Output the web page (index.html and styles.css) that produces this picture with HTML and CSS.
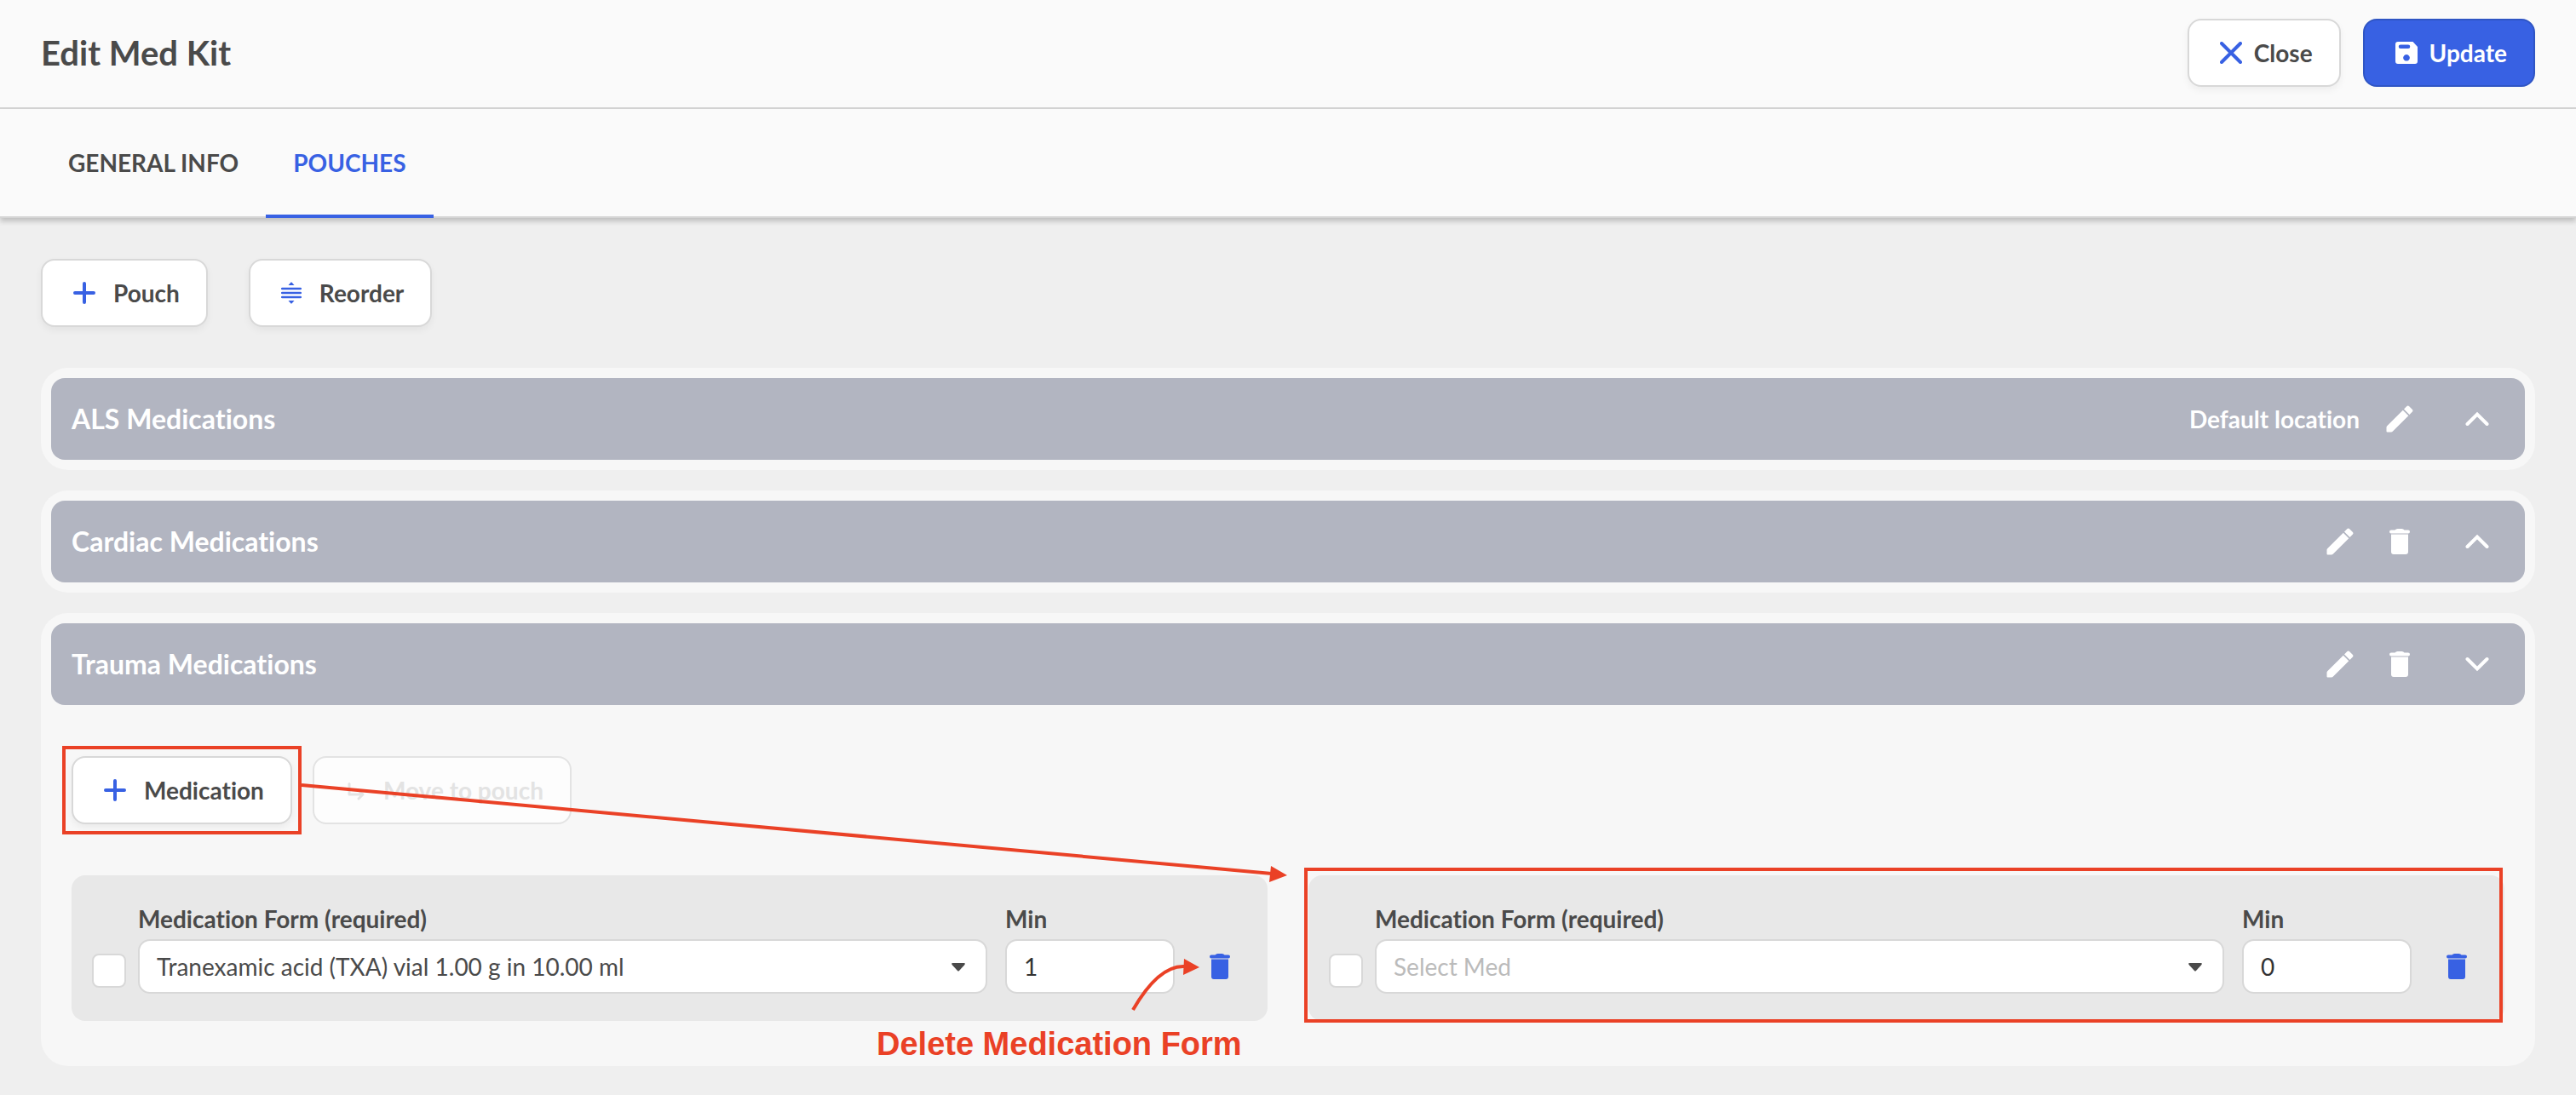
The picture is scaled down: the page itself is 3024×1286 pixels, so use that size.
FILE: index.html
```html
<!DOCTYPE html>
<html lang="en">
<head>
<meta charset="utf-8">
<title>Edit Med Kit</title>
<link rel="stylesheet" href="styles.css">
</head>
<body>
<svg class="defs" aria-hidden="true">
  <symbol id="plus" viewBox="0 0 26 26"><path d="M13 2v22M2 13h22" fill="none" stroke="currentColor" stroke-width="4" stroke-linecap="round"/></symbol>
  <symbol id="pencil" viewBox="0 0 32 32"><path d="M.5 30.500V26Q.5 25 1.200 24.300L19.800 5.700L26.300 12.200L8.200 30.300Q7.200 31.500 5.500 31.500H1.500Q.5 31.500.5 30.500ZM21 4.500L24.200 1.300Q25.700-.2 27.200 1.300L30.700 4.800Q32.200 6.300 30.700 7.800L27.500 11Z" fill="currentColor"/></symbol>
  <symbol id="trash" viewBox="0 0 24 30"><path d="M2 1.500H6.500Q7.500 0 9.500 0H14.500Q16.500 0 17.500 1.500H22Q24 1.500 24 3.500T22 5.500H2Q0 5.500 0 3.500T2 1.500ZM2 6.500H22V27Q22 30 19 30H5Q2 30 2 27Z" fill="currentColor"/></symbol>
  <symbol id="up" viewBox="0 0 28 18"><path d="M2.500 15L14 3.500L25.500 15" fill="none" stroke="currentColor" stroke-width="4" stroke-linecap="round"/></symbol>
  <symbol id="down" viewBox="0 0 28 18"><path d="M2.500 3L14 14.500L25.500 3" fill="none" stroke="currentColor" stroke-width="4" stroke-linecap="round"/></symbol>
</svg>

<header class="topbar">
  <h1 class="title">Edit Med Kit</h1>
  <div class="topbar-actions">
    <button class="btn btn-tight" type="button"><svg class="icon-26" viewBox="0 0 26 26"><path d="M2 2L24 24M24 2L2 24" fill="none" stroke="currentColor" stroke-width="4" stroke-linecap="round"/></svg>Close</button>
    <button class="btn btn-tight btn-primary" type="button"><svg class="icon-26" viewBox="0 0 26 26"><path fill-rule="evenodd" d="M3 0H20.500L26 6V23Q26 26 23 26H3Q0 26 0 23V3Q0 0 3 0ZM6 3.500a2 2 0 0 0 0 4.500H15a2 2 0 0 0 0-4.500ZM13 15a3.800 3.800 0 1 0 .01 0Z" fill="currentColor"/></svg>Update</button>
  </div>
</header>

<nav class="tabs">
  <a class="tab" href="#general">GENERAL INFO</a>
  <a class="tab tab-active" href="#pouches">POUCHES</a>
</nav>

<main class="content">
  <div class="toolbar">
    <button class="btn" type="button"><svg class="icon-26"><use href="#plus"/></svg>Pouch</button>
    <button class="btn" type="button"><svg class="icon-24" viewBox="0 0 24 26"><path d="M8.500 4L11.500.5H12.500L15.500 4ZM8.500 22L11.500 25.500H12.500L15.500 22Z" fill="currentColor"/><path d="M1.200 8H22.800M1.200 13H22.800M1.200 18H22.800" fill="none" stroke="currentColor" stroke-width="2.600" stroke-linecap="round"/></svg>Reorder</button>
  </div>

  <section class="pouch">
    <div class="pouch-head">
      <h2 class="pouch-name">ALS Medications</h2>
      <span class="default-location">Default location</span>
      <button class="icon-btn" type="button" aria-label="Edit"><svg class="icon-32"><use href="#pencil"/></svg></button>
      <button class="icon-btn toggle" type="button" aria-label="Expand"><svg class="chevron"><use href="#up"/></svg></button>
    </div>
  </section>

  <section class="pouch">
    <div class="pouch-head">
      <h2 class="pouch-name">Cardiac Medications</h2>
      <button class="icon-btn" type="button" aria-label="Edit"><svg class="icon-32"><use href="#pencil"/></svg></button>
      <button class="icon-btn" type="button" aria-label="Delete"><svg class="trash"><use href="#trash"/></svg></button>
      <button class="icon-btn toggle" type="button" aria-label="Expand"><svg class="chevron"><use href="#up"/></svg></button>
    </div>
  </section>

  <section class="pouch pouch-open">
    <div class="pouch-head">
      <h2 class="pouch-name">Trauma Medications</h2>
      <button class="icon-btn" type="button" aria-label="Edit"><svg class="icon-32"><use href="#pencil"/></svg></button>
      <button class="icon-btn" type="button" aria-label="Delete"><svg class="trash"><use href="#trash"/></svg></button>
      <button class="icon-btn toggle" type="button" aria-label="Collapse"><svg class="chevron"><use href="#down"/></svg></button>
    </div>
    <div class="pouch-body">
      <div class="med-actions">
        <div class="marked marked-button">
          <button class="btn" type="button"><svg class="icon-26"><use href="#plus"/></svg>Medication</button>
        </div>
        <button class="btn" type="button" disabled><svg class="icon-24" viewBox="0 0 24 26"><path d="M5 5.500V18H21M15 12.500L21 18L16 23" fill="none" stroke="currentColor" stroke-width="3" stroke-linecap="round" stroke-linejoin="round"/></svg>Move to pouch</button>
      </div>
      <div class="med-grid">
        <div class="med-card">
          <input class="check" type="checkbox" aria-label="Select medication 1">
          <div class="field field-form">
            <label for="form1">Medication Form (required)</label>
            <div class="select-wrap">
              <select class="control" id="form1"><option>Tranexamic acid (TXA) vial 1.00 g in 10.00 ml</option></select>
              <svg class="caret" viewBox="0 0 16 10"><path d="M1.500 0H14.500Q17 0 15 2.500L9 9Q8 10 7 9L1 2.500Q-1 0 1.500 0Z" fill="currentColor"/></svg>
            </div>
          </div>
          <div class="field field-min">
            <label for="min1">Min</label>
            <input class="control" id="min1" type="text" value="1">
          </div>
          <button class="icon-btn card-delete" type="button" aria-label="Delete medication form"><svg class="trash"><use href="#trash"/></svg></button>
        </div>
        <div class="med-card marked marked-card">
          <input class="check" type="checkbox" aria-label="Select medication 2">
          <div class="field field-form">
            <label for="form2">Medication Form (required)</label>
            <div class="select-wrap">
              <select class="control control-empty" id="form2"><option>Select Med</option></select>
              <svg class="caret" viewBox="0 0 16 10"><path d="M1.500 0H14.500Q17 0 15 2.500L9 9Q8 10 7 9L1 2.500Q-1 0 1.500 0Z" fill="currentColor"/></svg>
            </div>
          </div>
          <div class="field field-min">
            <label for="min2">Min</label>
            <input class="control" id="min2" type="text" value="0">
          </div>
          <button class="icon-btn card-delete" type="button" aria-label="Delete medication form"><svg class="trash"><use href="#trash"/></svg></button>
        </div>
      </div>
    </div>
    <svg class="arrows" viewBox="0 0 1480 532" aria-hidden="true">
      <path d="M306 202L1445 306M1282 466Q1312 414 1342 415" fill="none" stroke="currentColor" stroke-width="4"/>
      <path d="M1444 297L1463 308L1442 316ZM1342 406L1360 416L1341 425Z" fill="currentColor"/>
    </svg>
    <p class="note">Delete Medication Form</p>
  </section>
</main>
</body>
</html>
```
FILE: styles.css
```css
* { box-sizing: border-box; }

body {
  margin: 0;
  min-height: 100vh;
  background: #efefef;
  color: #4a4a4a;
  font-family: Lato, sans-serif;
  font-size: 28px;
  line-height: 36px;
  font-variant-ligatures: none;
}

h1, h2, p { margin: 0; }
svg { display: block; flex: none; }
.defs { position: absolute; width: 0; height: 0; }

.topbar {
  display: flex;
  align-items: center;
  justify-content: space-between;
  height: 128px;
  padding: 0 48px 2px;
  background: #fafafa;
  border-bottom: 2px solid #d5d5d5;
}
.title { font-size: 40px; line-height: 48px; font-weight: 700; }
.topbar-actions { display: flex; gap: 26px; }

.btn {
  display: flex;
  align-items: center;
  gap: 21px;
  height: 80px;
  padding: 0 31px 0 36px;
  background: #fff;
  border: 2px solid #d8d8d8;
  border-radius: 16px;
  box-shadow: 0 4px 8px rgba(0, 0, 0, .05);
  color: #4a4a4a;
  font: 700 28px/36px Lato, sans-serif;
  font-variant-ligatures: none;
}
.btn svg { color: #3861e3; }
.btn-tight { gap: 14px; }
.btn-primary { background: #3861e3; border-color: #2f55c4; color: #fff; box-shadow: none; }
.btn-primary svg { color: #fff; }
.btn:disabled { background: #fdfdfd; border-color: #e3e3e3; color: #e3e3e3; box-shadow: none; }
.btn:disabled svg { color: #e3e3e3; }

.icon-24 { width: 24px; height: 26px; }
.icon-26 { width: 26px; height: 26px; }
.icon-32 { width: 32px; height: 32px; }
.trash { width: 24px; height: 30px; }
.chevron { width: 28px; height: 18px; }

.tabs {
  display: flex;
  height: 128px;
  padding: 0 48px;
  background: #fafafa;
  border-bottom: 2px solid #d5d5d5;
  box-shadow: 0 4px 6px rgba(0, 0, 0, .2);
}
.tab {
  display: flex;
  align-items: center;
  height: 128px;
  padding: 2px 32px 0;
  border-bottom: 4px solid transparent;
  color: #4a4a4a;
  font-weight: 700;
  text-decoration: none;
}
.tab-active { color: #3861e3; border-color: #3861e3; }

.content {
  display: flex;
  flex-direction: column;
  gap: 24px;
  padding: 48px 48px 34px;
}
.toolbar { display: flex; gap: 48px; margin-bottom: 24px; }

.pouch { padding: 12px; background: #f7f7f7; border-radius: 32px; }
.pouch-open { position: relative; }
.pouch-head {
  display: flex;
  align-items: center;
  height: 96px;
  padding: 0 24px;
  background: #b2b5c1;
  border-radius: 16px;
  color: #fff;
}
.pouch-name { flex: 1; font-size: 32px; line-height: 40px; font-weight: 700; }
.default-location { margin-right: 12px; font-weight: 700; }

.icon-btn {
  display: flex;
  align-items: center;
  justify-content: center;
  width: 70px;
  height: 64px;
  padding: 0;
  background: none;
  border: 0;
  color: inherit;
}
.toggle { width: 64px; margin-left: 24px; }

.pouch-body { padding: 60px 24px 41px; }
.med-actions { display: flex; gap: 24px; margin-bottom: 60px; }
.med-grid { display: grid; grid-template-columns: 1fr 1fr; gap: 48px; }

.med-card {
  display: flex;
  align-items: flex-end;
  padding: 33px 24px 32px;
  background: #e8e8e8;
  border-radius: 16px;
}
.check {
  appearance: none;
  flex: none;
  width: 40px;
  height: 40px;
  margin: 0 14px 7px 0;
  background: #fff;
  border: 2px solid #d8d8d8;
  border-radius: 8px;
}
.field { display: flex; flex-direction: column; gap: 6px; }
.field label { font-weight: 700; line-height: 36px; }
.field-form { flex: 1; margin-right: 21px; }
.field-min { width: 199px; }
.control {
  appearance: none;
  display: block;
  width: 100%;
  height: 64px;
  padding: 0 20px;
  background: #fff;
  border: 2px solid #d8d8d8;
  border-radius: 14px;
  color: #4a4a4a;
  font: 400 28px/36px Lato, sans-serif;
  font-variant-ligatures: none;
}
input.control { color: #333; }
select.control-empty { color: #bbb; }
.select-wrap { position: relative; }
.caret { position: absolute; right: 26px; top: 28px; width: 16px; height: 10px; pointer-events: none; }
.card-delete { width: 64px; margin-left: 21px; color: #3861e3; }

/* Red call-outs drawn over the form */
.marked { position: relative; }
.marked::after { content: ""; position: absolute; border: 4px solid #ea4126; pointer-events: none; }
.marked-button::after { inset: -12px -11px; }
.marked-card::after { inset: -9px 2px -2px -5px; }
.arrows { position: absolute; left: 0; top: 0; width: 1480px; height: 532px; color: #ea4126; pointer-events: none; }
.note {
  position: absolute;
  left: 981px;
  bottom: 4px;
  color: #ea4126;
  font: 700 38px/44px "Liberation Sans", Arial, sans-serif;
}
```
